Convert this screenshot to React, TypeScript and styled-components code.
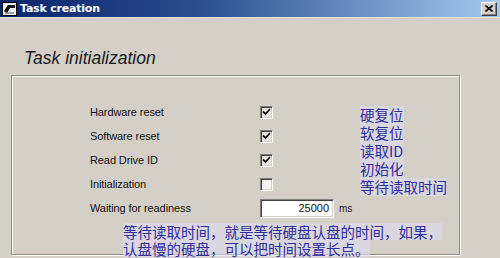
import React from 'react';
import styled, { createGlobalStyle } from 'styled-components';

const GlobalStyle = createGlobalStyle`
  html, body {
    margin: 0;
    padding: 0;
    background: #d4d0c8;
  }
  * {
    box-sizing: border-box;
  }
`;

const StyledWindow = styled.div`
  position: relative;
  display: flex;
  flex-direction: column;
  width: 500px;
  height: 258px;
  overflow: hidden;
  background: #d4d0c8;
  font-family: 'Liberation Sans', Arial, sans-serif;
`;

const StyledTitleBar = styled.header`
  display: flex;
  align-items: center;
  gap: 3px;
  height: 18px;
  padding: 0 3px 0 2px;
  background: linear-gradient(90deg, #0a246a 0%, #2c4d8e 40%, #a6caf0 100%);
  border-bottom: 1px solid #e4e2dc;
`;

const StyledTitle = styled.h1`
  flex: 1;
  margin: 0;
  font-family: 'DejaVu Sans', Tahoma, sans-serif;
  font-size: 11px;
  font-weight: bold;
  color: #ffffff;
  letter-spacing: -0.2px;
`;

const StyledCloseButton = styled.button`
  display: flex;
  align-items: center;
  justify-content: center;
  width: 16px;
  height: 14px;
  padding: 0;
  background: #d4d0c8;
  border: 1px solid;
  border-color: #ffffff #404040 #404040 #ffffff;
  box-shadow: inset -1px -1px #808080;
`;

const StyledContent = styled.main`
  display: flex;
  flex-direction: column;
  padding: 29px 40px 0 11px;
`;

const StyledHeading = styled.h2`
  margin: 0 0 6px 13px;
  font-size: 17.5px;
  font-weight: normal;
  font-style: italic;
  color: #1a1a1a;
  line-height: 22px;
`;

const StyledGroupBox = styled.section`
  display: grid;
  grid-template-columns: 170px auto;
  grid-auto-rows: 24px;
  align-items: center;
  width: 449px;
  height: 180px;
  padding: 24px 0 0 78px;
  border: 1px solid #8c8a85;
  box-shadow: inset 1px 1px #ffffff, 1px 1px #ffffff;
`;

const StyledLabel = styled.span`
  font-size: 11px;
  color: #111111;
  letter-spacing: -0.1px;
`;

const StyledControlCell = styled.div`
  display: flex;
  align-items: center;
  gap: 5px;
`;

const StyledCheckbox = styled.span<{ $checked: boolean }>`
  display: flex;
  align-items: center;
  justify-content: center;
  width: 13px;
  height: 13px;
  background: ${(p) => (p.$checked ? '#e6e4e0' : '#f4f3f1')};
  border: 1px solid;
  border-color: #808080 #ffffff #ffffff #808080;
  box-shadow: inset 1px 1px #404040, inset -1px -1px #d4d0c8;
`;

const StyledInput = styled.div`
  width: 74px;
  height: 19px;
  padding: 2px 4px 0 0;
  text-align: right;
  font-size: 11px;
  color: #111111;
  background: #ffffff;
  border: 1px solid;
  border-color: #808080 #ffffff #ffffff #808080;
  box-shadow: inset 1px 1px #404040, inset -1px -1px #d4d0c8;
`;

const StyledUnit = styled.span`
  font-size: 10px;
  color: #222222;
`;

const StyledNote = styled.div<{ $left: number; $top: number }>`
  position: absolute;
  left: ${(p) => p.$left}px;
  top: ${(p) => p.$top}px;
  display: flex;
  flex-direction: column;
  align-items: flex-start;
  font-family: 'Noto Sans CJK SC', 'Liberation Sans', sans-serif;
  font-size: 14.5px;
  color: #2e2e9c;
  white-space: nowrap;
`;

const StyledNoteLine = styled.span<{ $lineHeight: number }>`
  display: block;
  height: ${(p) => p.$lineHeight}px;
  line-height: ${(p) => p.$lineHeight}px;
  background: rgba(222, 220, 240, 0.6);
`;

const CheckMark = () => (
  <svg width="9" height="8" viewBox="0 0 9 8">
    <path d="M1 3.5 L3.5 6 L8 1" fill="none" stroke="#111" strokeWidth="1.8" />
  </svg>
);

const WindowIcon = () => (
  <svg width="15" height="14" viewBox="0 0 15 14">
    <rect x="0.5" y="0.5" width="14" height="13" fill="#f0f0f0" stroke="#000" />
    <path d="M2 9 L6 3 L13 3 L13 6 L8 6 L5 11 Z" fill="#111" />
    <path d="M3 11 L12 11" stroke="#555" strokeWidth="1" />
  </svg>
);

const CloseGlyph = () => (
  <svg width="8" height="7" viewBox="0 0 8 7">
    <path d="M0.5 0.5 L7.5 6.5 M7.5 0.5 L0.5 6.5" stroke="#000" strokeWidth="1.6" />
  </svg>
);

const rows = [
  { label: 'Hardware reset', checked: true },
  { label: 'Software reset', checked: true },
  { label: 'Read Drive ID', checked: true },
  { label: 'Initialization', checked: false },
];

const sideNotes = ['硬复位', '软复位', '读取ID', '初始化', '等待读取时间'];
const bottomNotes = [
  '等待读取时间，就是等待硬盘认盘的时间，如果，',
  '认盘慢的硬盘，可以把时间设置长点。',
];

export default function App() {
  return (
    <>
      <GlobalStyle />
      <StyledWindow>
        <StyledTitleBar>
          <WindowIcon />
          <StyledTitle>Task creation</StyledTitle>
          <StyledCloseButton>
            <CloseGlyph />
          </StyledCloseButton>
        </StyledTitleBar>
        <StyledContent>
          <StyledHeading>Task initialization</StyledHeading>
          <StyledGroupBox>
            {rows.map((row) => (
              <React.Fragment key={row.label}>
                <StyledLabel>{row.label}</StyledLabel>
                <StyledControlCell>
                  <StyledCheckbox $checked={row.checked}>
                    {row.checked && <CheckMark />}
                  </StyledCheckbox>
                </StyledControlCell>
              </React.Fragment>
            ))}
            <StyledLabel>Waiting for readiness</StyledLabel>
            <StyledControlCell>
              <StyledInput>25000</StyledInput>
              <StyledUnit>ms</StyledUnit>
            </StyledControlCell>
          </StyledGroupBox>
        </StyledContent>
        <StyledNote $left={360} $top={106}>
          {sideNotes.map((t) => (
            <StyledNoteLine key={t} $lineHeight={18}>
              {t}
            </StyledNoteLine>
          ))}
        </StyledNote>
        <StyledNote $left={123} $top={223}>
          {bottomNotes.map((t) => (
            <StyledNoteLine key={t} $lineHeight={17}>
              {t}
            </StyledNoteLine>
          ))}
        </StyledNote>
      </StyledWindow>
    </>
  );
}
